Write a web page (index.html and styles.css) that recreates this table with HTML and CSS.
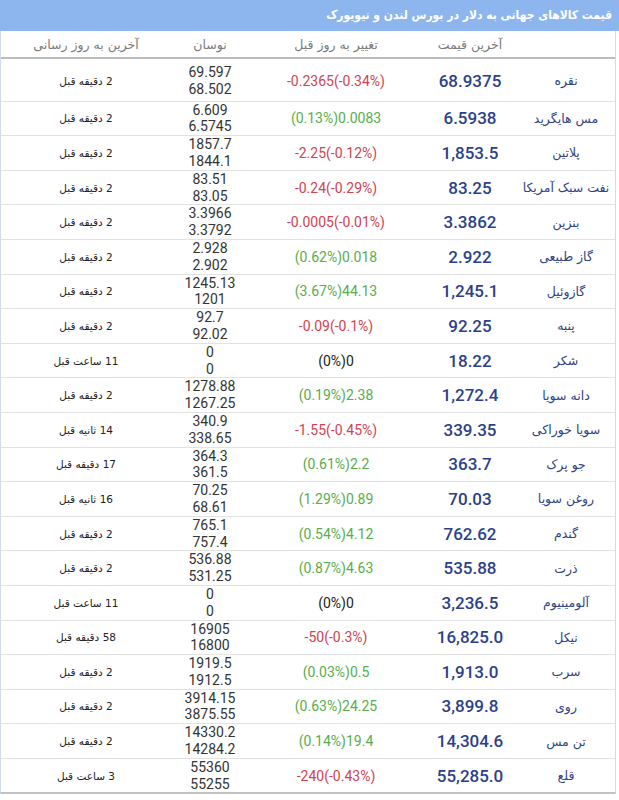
FILE: index.html
```html
<!DOCTYPE html>
<html lang="fa">
<head>
<meta charset="utf-8">
<link rel="stylesheet" href="styles.css">
</head>
<body>
<div class="board">
  <div class="title">قیمت کالاهای جهانی به دلار در بورس لندن و نیویورک</div>
  <div class="table">
    <div class="row head">
      <div></div>
      <div>آخرین قیمت</div>
      <div>تغییر به روز قبل</div>
      <div>نوسان</div>
      <div>آخرین به روز رسانی</div>
    </div>
    <div class="row first"><div class="name">نقره</div><div class="price">68.9375</div><div class="chg down">-0.2365(-0.34%)</div><div class="range"><span>69.597</span><span>68.502</span></div><div class="upd">2 دقیقه قبل</div></div>
    <div class="row"><div class="name">مس هایگرید</div><div class="price">6.5938</div><div class="chg up">(0.13%)0.0083</div><div class="range"><span>6.609</span><span>6.5745</span></div><div class="upd">2 دقیقه قبل</div></div>
    <div class="row"><div class="name">پلاتین</div><div class="price">1,853.5</div><div class="chg down">-2.25(-0.12%)</div><div class="range"><span>1857.7</span><span>1844.1</span></div><div class="upd">2 دقیقه قبل</div></div>
    <div class="row"><div class="name">نفت سبک آمریکا</div><div class="price">83.25</div><div class="chg down">-0.24(-0.29%)</div><div class="range"><span>83.51</span><span>83.05</span></div><div class="upd">2 دقیقه قبل</div></div>
    <div class="row"><div class="name">بنزین</div><div class="price">3.3862</div><div class="chg down">-0.0005(-0.01%)</div><div class="range"><span>3.3966</span><span>3.3792</span></div><div class="upd">2 دقیقه قبل</div></div>
    <div class="row"><div class="name">گاز طبیعی</div><div class="price">2.922</div><div class="chg up">(0.62%)0.018</div><div class="range"><span>2.928</span><span>2.902</span></div><div class="upd">2 دقیقه قبل</div></div>
    <div class="row"><div class="name">گازوئیل</div><div class="price">1,245.1</div><div class="chg up">(3.67%)44.13</div><div class="range"><span>1245.13</span><span>1201</span></div><div class="upd">2 دقیقه قبل</div></div>
    <div class="row"><div class="name">پنبه</div><div class="price">92.25</div><div class="chg down">-0.09(-0.1%)</div><div class="range"><span>92.7</span><span>92.02</span></div><div class="upd">2 دقیقه قبل</div></div>
    <div class="row"><div class="name">شکر</div><div class="price">18.22</div><div class="chg">(0%)0</div><div class="range"><span>0</span><span>0</span></div><div class="upd">11 ساعت قبل</div></div>
    <div class="row"><div class="name">دانه سویا</div><div class="price">1,272.4</div><div class="chg up">(0.19%)2.38</div><div class="range"><span>1278.88</span><span>1267.25</span></div><div class="upd">2 دقیقه قبل</div></div>
    <div class="row"><div class="name">سویا خوراکی</div><div class="price">339.35</div><div class="chg down">-1.55(-0.45%)</div><div class="range"><span>340.9</span><span>338.65</span></div><div class="upd">14 ثانیه قبل</div></div>
    <div class="row"><div class="name">جو پرک</div><div class="price">363.7</div><div class="chg up">(0.61%)2.2</div><div class="range"><span>364.3</span><span>361.5</span></div><div class="upd">17 دقیقه قبل</div></div>
    <div class="row"><div class="name">روغن سویا</div><div class="price">70.03</div><div class="chg up">(1.29%)0.89</div><div class="range"><span>70.25</span><span>68.61</span></div><div class="upd">16 ثانیه قبل</div></div>
    <div class="row"><div class="name">گندم</div><div class="price">762.62</div><div class="chg up">(0.54%)4.12</div><div class="range"><span>765.1</span><span>757.4</span></div><div class="upd">2 دقیقه قبل</div></div>
    <div class="row"><div class="name">ذرت</div><div class="price">535.88</div><div class="chg up">(0.87%)4.63</div><div class="range"><span>536.88</span><span>531.25</span></div><div class="upd">2 دقیقه قبل</div></div>
    <div class="row"><div class="name">آلومینیوم</div><div class="price">3,236.5</div><div class="chg">(0%)0</div><div class="range"><span>0</span><span>0</span></div><div class="upd">11 ساعت قبل</div></div>
    <div class="row"><div class="name">نیکل</div><div class="price">16,825.0</div><div class="chg down">-50(-0.3%)</div><div class="range"><span>16905</span><span>16800</span></div><div class="upd">58 دقیقه قبل</div></div>
    <div class="row"><div class="name">سرب</div><div class="price">1,913.0</div><div class="chg up">(0.03%)0.5</div><div class="range"><span>1919.5</span><span>1912.5</span></div><div class="upd">2 دقیقه قبل</div></div>
    <div class="row"><div class="name">روی</div><div class="price">3,899.8</div><div class="chg up">(0.63%)24.25</div><div class="range"><span>3914.15</span><span>3875.55</span></div><div class="upd">2 دقیقه قبل</div></div>
    <div class="row"><div class="name">تن مس</div><div class="price">14,304.6</div><div class="chg up">(0.14%)19.4</div><div class="range"><span>14330.2</span><span>14284.2</span></div><div class="upd">2 دقیقه قبل</div></div>
    <div class="row"><div class="name">قلع</div><div class="price">55,285.0</div><div class="chg down">-240(-0.43%)</div><div class="range"><span>55360</span><span>55255</span></div><div class="upd">3 ساعت قبل</div></div>
  </div>
</div>
</body>
</html>
```

FILE: styles.css
```css
* { box-sizing: border-box; }
body {
  margin: 0;
  background: #ffffff;
  font-family: Roboto, "DejaVu Sans", sans-serif;
  color: #333;
}
.board {
  width: 619px;
}
.title {
  height: 31px;
  background: #8db6ef;
  color: #ffffff;
  font-family: "DejaVu Sans Condensed", "DejaVu Sans", sans-serif;
  font-weight: bold;
  font-size: 12px;
  direction: rtl;
  display: flex;
  align-items: center;
  padding-right: 7px;
  padding-bottom: 2px;
}
.table {
  width: 616px;
  direction: rtl;
  border-left: 1px solid #cfdcec;
  border-right: 1px solid #cfdcec;
  border-bottom: 2px solid #c2c2c2;
}
.row {
  display: grid;
  grid-template-columns: 98px 94px 174px 78px 170px;
  align-items: center;
  text-align: center;
  border-bottom: 1px solid #e2e2e2;
}
.row:last-child {
  border-bottom: none;
}
.head {
  height: 28px;
  border-bottom: 2px solid #bdbdbd;
  color: #7a7a7a;
  font-family: "DejaVu Sans", sans-serif;
  font-size: 12.5px;
}
.first {
  padding: 5px 0 3px;
}
.name {
  font-family: "DejaVu Sans", sans-serif;
  font-size: 12.5px;
  color: #2f4385;
}
.price {
  font-size: 17px;
  font-weight: 500;
  color: #2b3f8c;
  direction: ltr;
}
.chg {
  font-size: 14px;
  color: #222;
  direction: ltr;
}
.chg.down { color: #d14350; }
.chg.up { color: #58ae4c; }
.range {
  display: flex;
  flex-direction: column;
  font-size: 14px;
  line-height: 16.8px;
  color: #333;
  direction: ltr;
}
.upd {
  font-family: "DejaVu Sans", sans-serif;
  font-size: 10.5px;
  color: #222;
}
```
